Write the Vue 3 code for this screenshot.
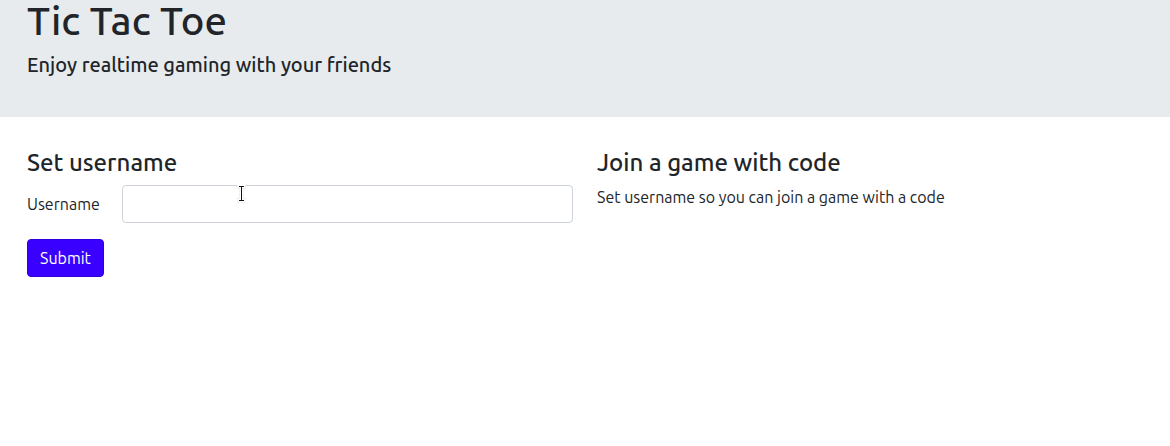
<script setup>
import { ref } from 'vue'

const username = ref('')
</script>

<template>
  <div class="page">
    <header class="hero">
      <h1>Tic Tac Toe</h1>
      <p class="tagline">Enjoy realtime gaming with your friends</p>
    </header>
    <main class="columns">
      <section>
        <h2>Set username</h2>
        <form @submit.prevent>
          <div class="field">
            <label for="username">Username</label>
            <div class="control">
              <input id="username" v-model="username" type="text" autocomplete="off" />
              <svg class="cursor" width="9" height="18" viewBox="0 0 9 18" aria-hidden="true">
                <path d="M2 1.5H7M4.5 1.5V15.5M2 15.5H7" fill="none" stroke="#e4e4e4" stroke-width="4" stroke-linecap="square" />
                <path d="M2 1.5H7M4.5 1.5V15.5M2 15.5H7" fill="none" stroke="#fff" stroke-width="3" stroke-linecap="square" />
                <path d="M2 1.5H7M4.5 2V15M2 15.5H7" fill="none" stroke="#111" />
              </svg>
            </div>
          </div>
          <button type="submit">Submit</button>
        </form>
      </section>
      <section>
        <h2>Join a game with code</h2>
        <p>Set username so you can join a game with a code</p>
      </section>
    </main>
  </div>
</template>

<style>
body {
  margin: 0;
  background: #fff;
}
</style>

<style scoped>
.page {
  font-family: Ubuntu, "Noto Sans", "Open Sans", sans-serif;
  font-size: 16px;
  line-height: 24px;
  color: #212529;
}

h1,
h2,
p {
  margin: 0;
}

.hero {
  padding: 0 27px 40px;
  background: #e7ebee;
}

h1,
h2,
.tagline {
  font-weight: 500;
}

h1 {
  font-size: 40px;
  line-height: 42px;
  margin-bottom: 11px;
}

.tagline {
  font-size: 20px;
  line-height: 24px;
}

.columns {
  display: grid;
  grid-template-columns: 1fr 1fr;
  gap: 24px;
  padding: 31px 27px;
}

h2 {
  font-size: 24px;
  line-height: 29px;
  margin-bottom: 8px;
}

.field {
  display: grid;
  grid-template-columns: 1fr 5fr;
  column-gap: 5px;
  align-items: center;
  margin-bottom: 16px;
}

.control {
  position: relative;
}

input {
  display: block;
  box-sizing: border-box;
  width: 100%;
  height: 38px;
  padding: 6px 12px;
  border: 1px solid #ced4da;
  border-radius: 4px;
  background: #fff;
  color: inherit;
  font: inherit;
}

.cursor {
  position: absolute;
  top: 0;
  left: 115px;
  pointer-events: none;
}

button {
  padding: 6px 12px;
  border: 1px solid #3200e0;
  border-radius: 4px;
  background: #3a00ff;
  color: #fff;
  font: inherit;
}
</style>
